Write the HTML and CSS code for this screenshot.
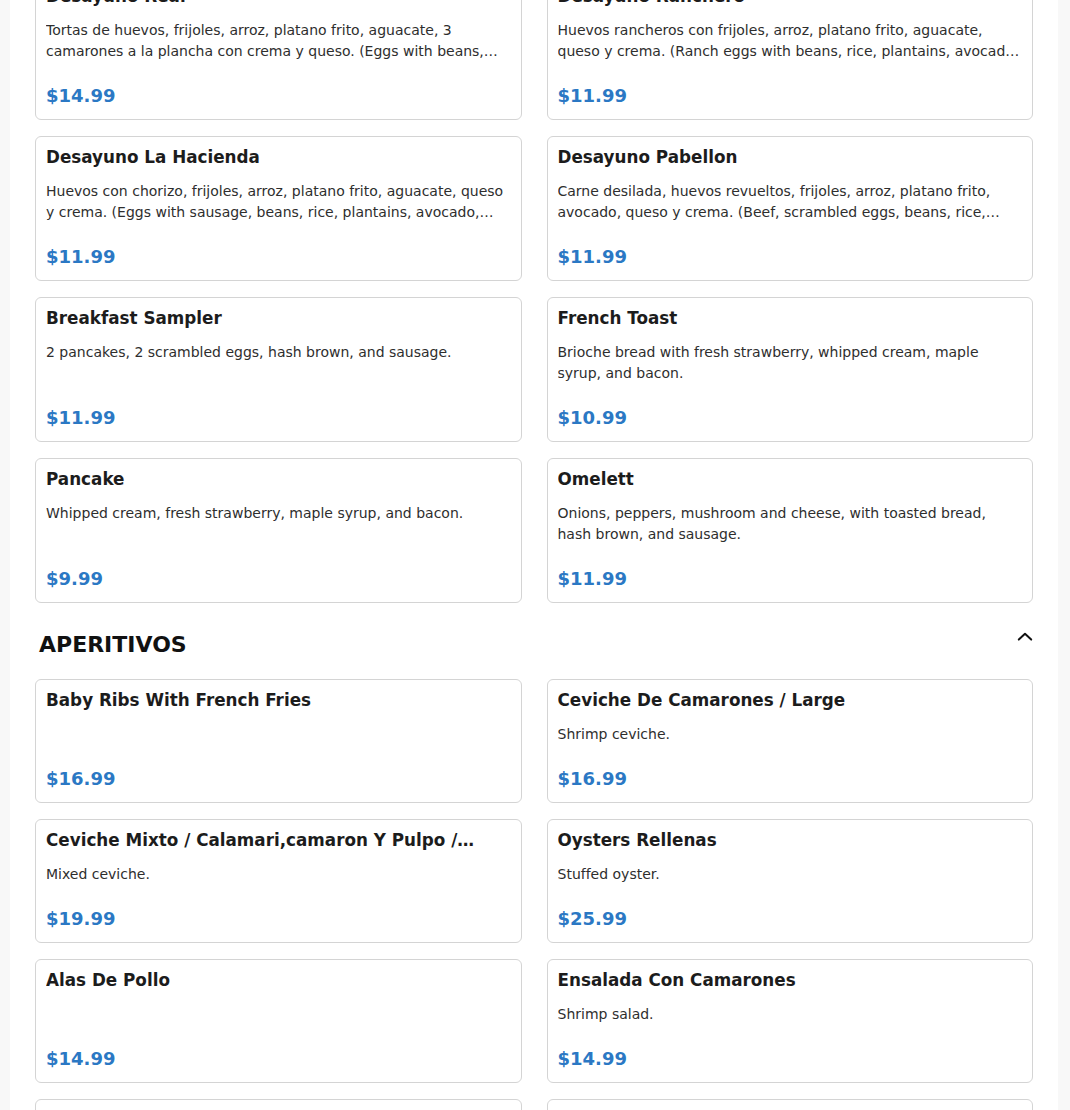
FILE: index.html
```html
<!DOCTYPE html>
<html lang="es">
<head>
<meta charset="utf-8">
<title>Menu</title>
<link rel="stylesheet" href="styles.css">
</head>
<body>
<main class="menu">
  <div class="grid grid-first">
    <article class="card">
      <h3 class="title">Desayuno Real</h3>
      <p class="desc">Tortas de huevos, frijoles, arroz, platano frito, aguacate, 3 camarones a la plancha con crema y queso. (Eggs with beans, rice, plantains, avocado, 3 grilled shrimp with cream and cheese.)</p>
      <div class="price">$14.99</div>
    </article>
    <article class="card">
      <h3 class="title">Desayuno Ranchero</h3>
      <p class="desc">Huevos rancheros con frijoles, arroz, platano frito, aguacate, queso y crema. (Ranch eggs with beans, rice, plantains, avocado, cheese and cream.)</p>
      <div class="price">$11.99</div>
    </article>
    <article class="card">
      <h3 class="title">Desayuno La Hacienda</h3>
      <p class="desc">Huevos con chorizo, frijoles, arroz, platano frito, aguacate, queso y crema. (Eggs with sausage, beans, rice, plantains, avocado, cheese and cream.)</p>
      <div class="price">$11.99</div>
    </article>
    <article class="card">
      <h3 class="title">Desayuno Pabellon</h3>
      <p class="desc">Carne desilada, huevos revueltos, frijoles, arroz, platano frito, avocado, queso y crema. (Beef, scrambled eggs, beans, rice, plantains, avocado, cheese and cream.)</p>
      <div class="price">$11.99</div>
    </article>
    <article class="card">
      <h3 class="title">Breakfast Sampler</h3>
      <p class="desc">2 pancakes, 2 scrambled eggs, hash brown, and sausage.</p>
      <div class="price">$11.99</div>
    </article>
    <article class="card">
      <h3 class="title">French Toast</h3>
      <p class="desc">Brioche bread with fresh strawberry, whipped cream, maple syrup, and bacon.</p>
      <div class="price">$10.99</div>
    </article>
    <article class="card">
      <h3 class="title">Pancake</h3>
      <p class="desc">Whipped cream, fresh strawberry, maple syrup, and bacon.</p>
      <div class="price">$9.99</div>
    </article>
    <article class="card">
      <h3 class="title">Omelett</h3>
      <p class="desc">Onions, peppers, mushroom and cheese, with toasted bread, hash brown, and sausage.</p>
      <div class="price">$11.99</div>
    </article>
  </div>

  <section class="section">
    <div class="section-head">
      <h2 class="section-title">APERITIVOS</h2>
      <svg class="chevron" width="16" height="16" viewBox="0 0 16 16" aria-hidden="true"><path d="M1.8 10.6 L8 4.8 L14.2 10.6" fill="none" stroke="#111" stroke-width="2" stroke-linecap="round" stroke-linejoin="round"/></svg>
    </div>
    <div class="grid">
      <article class="card">
        <h3 class="title">Baby Ribs With French Fries</h3>
        <div class="price">$16.99</div>
      </article>
      <article class="card">
        <h3 class="title">Ceviche De Camarones / Large</h3>
        <p class="desc">Shrimp ceviche.</p>
        <div class="price">$16.99</div>
      </article>
      <article class="card">
        <h3 class="title">Ceviche Mixto / Calamari,camaron Y Pulpo / Large</h3>
        <p class="desc">Mixed ceviche.</p>
        <div class="price">$19.99</div>
      </article>
      <article class="card">
        <h3 class="title">Oysters Rellenas</h3>
        <p class="desc">Stuffed oyster.</p>
        <div class="price">$25.99</div>
      </article>
      <article class="card">
        <h3 class="title">Alas De Pollo</h3>
        <div class="price">$14.99</div>
      </article>
      <article class="card">
        <h3 class="title">Ensalada Con Camarones</h3>
        <p class="desc">Shrimp salad.</p>
        <div class="price">$14.99</div>
      </article>
      <article class="card">
        <h3 class="title">Tostones Con Camarones</h3>
        <p class="desc">Fried plantains with shrimp.</p>
        <div class="price">$13.99</div>
      </article>
      <article class="card">
        <h3 class="title">Yuca Frita</h3>
        <p class="desc">Fried cassava.</p>
        <div class="price">$8.99</div>
      </article>
    </div>
  </section>
</main>
</body>
</html>
```

FILE: styles.css
```css
* {
  box-sizing: border-box;
}

html, body {
  margin: 0;
  padding: 0;
}

body {
  background: #f8f8f8;
  font-family: "DejaVu Sans", "Liberation Sans", sans-serif;
  color: #212121;
  overflow: hidden;
}

.menu {
  margin: 0 12px 0 10px;
  background: #ffffff;
  padding: 0 25px 40px 25px;
  min-height: 1110px;
}

.grid {
  display: grid;
  grid-template-columns: 1fr 1fr;
  column-gap: 25px;
  row-gap: 16px;
}

.grid-first {
  margin-top: -25px;
}

.card {
  display: flex;
  flex-direction: column;
  border: 1px solid #d4d4d4;
  border-radius: 6px;
  padding: 10px;
  background: #fff;
  min-width: 0;
}

.title {
  margin: 0 0 13px 0;
  padding-right: 36px;
  font-size: 16.8px;
  line-height: 21px;
  font-weight: bold;
  color: #1c1c1c;
  white-space: nowrap;
  overflow: hidden;
  text-overflow: ellipsis;
}

.desc {
  margin: 0;
  font-size: 14px;
  line-height: 21px;
  color: #2e2e2e;
  display: -webkit-box;
  -webkit-box-orient: vertical;
  -webkit-line-clamp: 2;
  overflow: hidden;
}

.price {
  margin-top: auto;
  padding: 23px 0 2px 0;
  font-size: 18px;
  line-height: 22px;
  font-weight: bold;
  color: #2b78c4;
}

.section-head {
  display: flex;
  justify-content: space-between;
  align-items: flex-start;
  padding: 29px 0 21px 4px;
}

.section-title {
  margin: 0;
  font-size: 22px;
  line-height: 26px;
  font-weight: bold;
  color: #111;
}

.chevron {
  display: block;
  margin-top: -3px;
}
```
